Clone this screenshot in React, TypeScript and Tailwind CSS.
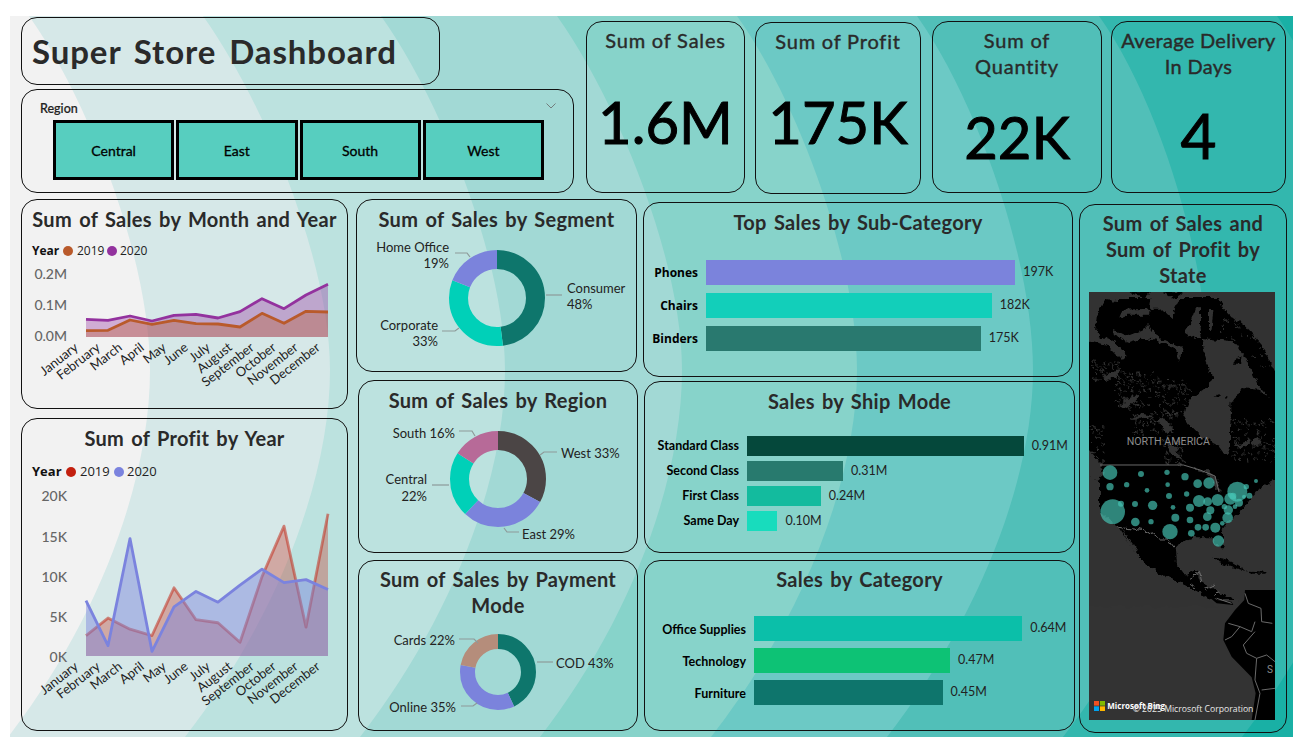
import React from "react";

const waves = [
  { top: 29, mid: 150, bottom: 8, fill: "#d6e8e8" },
  { top: 203, mid: 330, bottom: 185, fill: "#bce2df" },
  { top: 381, mid: 505, bottom: 360, fill: "#a2d9d5" },
  { top: 557, mid: 682, bottom: 540, fill: "#87d3ca" },
  { top: 737, mid: 857, bottom: 711, fill: "#6cc9c5" },
  { top: 917, mid: 1033, bottom: 887, fill: "#51bfb8" },
  { top: 1099, mid: 1208, bottom: 1063, fill: "#33b7ae" },
  { top: 1277, mid: 1385, bottom: 1242, fill: "#19b0a5" },
];

const months = ["January", "February", "March", "April", "May", "June", "July", "August", "September", "October", "November", "December"];

// points below were read off the 3x crops, so they go through a 1/3 transform
const sales2020 = [373, 376, 363, 378, 361, 358, 369, 350, 311, 341, 300, 268];
const sales2019 = [407, 406, 375, 388, 376, 386, 387, 396, 355, 385, 349, 351];
const profit2019 = [655, 603, 636, 655, 513, 608, 617, 675, 480, 330, 630, 293];
const profit2020 = [551, 685, 367, 702, 570, 524, 556, 505, 458, 498, 489, 518];

const bubbles = [
  [75, 68, 22], [75, 110, 11], [125, 104, 8], [168, 72, 9], [246, 67, 8], [300, 80, 11], [338, 101, 13], [372, 99, 17],
  [248, 104, 7], [186, 121, 7], [252, 138, 9], [305, 132, 8], [150, 162, 9], [108, 161, 9], [83, 185, 37], [203, 166, 14],
  [264, 172, 7], [151, 216, 13], [198, 215, 8], [271, 203, 12], [255, 245, 23], [315, 173, 12], [315, 210, 10], [319, 250, 10],
  [339, 232, 10], [362, 232, 10], [391, 233, 15], [367, 200, 13], [376, 181, 12], [342, 153, 18], [368, 155, 13], [398, 150, 18],
  [436, 146, 18], [457, 125, 30], [462, 158, 12], [430, 180, 14], [428, 203, 16], [412, 220, 7], [400, 273, 17], [513, 93, 6],
  [484, 110, 8], [493, 137, 9], [477, 140, 6], [444, 138, 10], [450, 170, 7], [418, 170, 8],
];

function specks(count: number, x: number, y: number, w: number, h: number, seed: number) {
  const out: number[][] = [];
  for (let i = 0; i < count; i++) {
    const a = Math.sin(i * 12.9898 + seed) * 43758.5453;
    const b = Math.sin(i * 78.233 + seed) * 24634.6345;
    out.push([x + (a - Math.floor(a)) * w, y + (b - Math.floor(b)) * h]);
  }
  return out;
}

const lakeSpecks = [
  ...specks(90, 90, 250, 110, 110, 1),
  ...specks(80, 210, 270, 100, 110, 2),
  ...specks(50, 140, 370, 130, 70, 3),
  ...specks(90, 440, 390, 130, 130, 4),
  ...specks(30, 15, 410, 40, 120, 5),
  ...specks(40, 230, 440, 70, 90, 6),
  ...specks(50, 20, 215, 80, 60, 7),
  ...specks(60, 390, 90, 170, 160, 8),
];

function Card({ className = "", children }: { className?: string; children?: React.ReactNode }) {
  return <div className={`rounded-[16px] border border-[#111] ${className}`}>{children}</div>;
}

function Title({ children, className = "h-[41px] pb-[4px]" }: { children: React.ReactNode; className?: string }) {
  return (
    <div className={`flex items-center justify-center text-center text-[20px] leading-[26px] font-bold tracking-[0.3px] text-[#2a2a2a] [word-spacing:2px] ${className}`}>
      {children}
    </div>
  );
}

function Kpi({ title, value, className, titleClass = "tracking-[0.8px]", valueClass }: { title: React.ReactNode; value: string; className: string; titleClass?: string; valueClass: string }) {
  return (
    <Card className={`flex shrink-0 flex-col h-[172px] pt-[5px] ${className}`}>
      <div className={`text-center text-[20px] leading-[26px] text-[#2a2a2a] [-webkit-text-stroke:0.4px_#2a2a2a] ${titleClass}`}>{title}</div>
      <div className={`text-center text-black [-webkit-text-stroke:1px_black] ${valueClass}`}>{value}</div>
    </Card>
  );
}

function AreaChart({ top, height, lines, ticks, legend, baseline, scaleY }: {
  top: number;
  height: number;
  lines: { points: number[]; color: string; opacity: number; lineOpacity: number }[];
  ticks: { label: string; y: number }[];
  legend: { y: number; size: number; yearX: number; a: number; b: number; colors: [string, string] };
  baseline: number;
  scaleY: (y: number) => number;
}) {
  const xAt = (i: number) => 86 + i * 22;
  return (
    <svg viewBox={`22 ${top} 325 ${height}`} className="block w-[325px]" style={{ height }}>
      <text x={legend.yearX} y={legend.y + 4} fontSize={legend.size} fontWeight={700} fill="#111" fontFamily="Open Sans">Year</text>
      <circle cx={legend.a - 9} cy={legend.y} r={5} fill={legend.colors[0]} />
      <text x={legend.a} y={legend.y + 4} fontSize={legend.size} fill="#222" fontFamily="Open Sans">2019</text>
      <circle cx={legend.b - 8} cy={legend.y} r={5} fill={legend.colors[1]} />
      <text x={legend.b} y={legend.y + 4} fontSize={legend.size} fill="#222" fontFamily="Open Sans">2020</text>
      {ticks.map((t) => (
        <text key={t.label} x={67} y={t.y + 5} textAnchor="end" fontSize={14} fontWeight={500} fill="#666">{t.label}</text>
      ))}
      {lines.map((l) => {
        const pts = l.points.map((p, i) => `${xAt(i)},${scaleY(p)}`).join(" ");
        return (
          <g key={l.color}>
            <polygon points={`86,${baseline} ${pts} 328,${baseline}`} fill={l.color} fillOpacity={l.opacity} />
            <polyline points={pts} fill="none" stroke={l.color} strokeWidth={2.8} strokeOpacity={l.lineOpacity} strokeLinejoin="round" />
          </g>
        );
      })}
      {months.map((m, i) => (
        <text key={m} x={xAt(i) - 7} y={baseline + 12} textAnchor="end" fontSize={13} fill="#222" transform={`rotate(-38 ${xAt(i) - 7} ${baseline + 12})`}>
          {m}
        </text>
      ))}
    </svg>
  );
}

function Donut({ cx, cy, r, width, segments }: { cx: number; cy: number; r: number; width: number; segments: { share: number; color: string }[] }) {
  let used = 0;
  return (
    <g transform={`rotate(-90 ${cx} ${cy})`}>
      {segments.map((s) => {
        const el = (
          <circle key={s.color} cx={cx} cy={cy} r={r} fill="none" stroke={s.color} strokeWidth={width} pathLength={100} strokeDasharray={`${s.share} 100`} strokeDashoffset={-used} />
        );
        used += s.share;
        return el;
      })}
    </g>
  );
}

function Leader({ points }: { points: string }) {
  return <polyline points={points} fill="none" stroke="#8d9a99" strokeWidth={1.2} />;
}

function Label({ x, y, anchor = "start", children }: { x: number; y: number; anchor?: "start" | "end"; children: string }) {
  return (
    <text x={x} y={y + 5} textAnchor={anchor} fontSize={13} fill="#222">{children}</text>
  );
}

function Bars({ rows, labelWidth, scale, barHeight, gap, className, labelClass, valueClass }: {
  rows: { label: string; value: number; text: string; color: string }[];
  labelWidth: string;
  scale: number;
  barHeight: number;
  gap: string;
  className: string;
  labelClass: string;
  valueClass: string;
}) {
  return (
    <div className={`flex flex-col ${gap} ${className}`}>
      {rows.map((r) => (
        <div key={r.label} className="flex items-center">
          <div className={`shrink-0 pr-2 text-right text-black ${labelWidth} ${labelClass}`}>{r.label}</div>
          <div className="shrink-0" style={{ width: r.value * scale, height: barHeight, backgroundColor: r.color }} />
          <div className={`pl-2 text-[#222] ${valueClass}`}>{r.text}</div>
        </div>
      ))}
    </div>
  );
}

function StoreMap() {
  return (
    <svg viewBox="1089 292 186 428" className="block h-[428px] w-[186px] bg-[#333]">
      <defs>
        <filter id="coast" x="-10%" y="-10%" width="120%" height="120%">
          <feTurbulence type="fractalNoise" baseFrequency="0.05" numOctaves={3} seed={4} />
          <feDisplacementMap in="SourceGraphic" scale={22} xChannelSelector="R" yChannelSelector="G" />
        </filter>
      </defs>
      {/* canada and arctic, coords from the 3x crop at 1085,288 */}
      <g transform="translate(1085 288) scale(0.3333)">
        <g filter="url(#coast)">
          <rect x="-30" y="30" width="640" height="550" fill="#000" />
          <g fill="#333">
            <path d="M380 -20 H620 V260 L570 250 530 170 480 115 440 85 415 60 Z" />
            <path d="M-30 -20 H140 V12 L100 40 60 35 35 85 30 130 60 150 95 165 125 205 110 215 70 175 -30 150 Z" />
            <path d="M110 65 L195 62 190 80 130 80 100 92 Z" />
            <path d="M85 125 L125 145 175 125 190 110 215 145 260 165 290 175 285 222 265 180 215 158 170 152 130 162 90 145 Z" />
            <path d="M200 20 L290 20 260 90 230 62 195 62 Z" />
            <path d="M320 100 L335 55 345 55 345 100 350 150 330 150 300 130 Z" />
            <path d="M372 60 L385 60 380 125 372 130 Z" />
            <path d="M350 150 L400 155 445 160 480 205 500 250 520 290 555 330 520 305 470 300 440 345 435 420 435 480 425 505 400 470 345 440 310 405 295 380 305 345 365 300 385 265 370 240 355 180 Z" />
            <rect x="-30" y="-20" width="640" height="45" />
            {lakeSpecks.map(([x, y], i) => (
              <rect key={i} x={x} y={y} width={i % 3 === 0 ? 10 : 6} height={3} transform={`rotate(${(i * 37) % 90} ${x} ${y})`} />
            ))}
            <path d="M100 352 L135 325 170 320 145 345 125 360 Z M55 270 L85 245 110 240 90 262 65 280 Z M130 395 L175 378 205 385 165 395 Z M215 400 L235 385 265 425 245 435 Z M245 465 L275 480 285 515 262 500 Z" />
            <path d="M455 470 L500 455 490 470 450 480 Z M500 460 L525 445 520 470 505 472 Z" />
          </g>
          <path d="M130 10 L200 10 180 30 Z M230 10 L300 10 270 32 Z M450 215 L470 205 465 230 445 230 Z M385 325 L405 318 402 328 Z M418 332 L428 328 426 338 Z" fill="#000" />
        </g>
      </g>
      {/* usa, mexico, caribbean, coords from the 3x crop at 1085,450 */}
      <g transform="translate(1085 450) scale(0.3333)">
        <g filter="url(#coast)">
          <rect x="-30" y="60" width="640" height="390" fill="#000" />
          <path fill="#333" d="M-30 70 L45 90 45 185 80 215 105 235 125 255 160 320 195 350 235 375 300 405 340 425 400 470 H-30 Z" />
          <path fill="#333" d="M620 92 L570 92 530 110 500 140 460 190 430 215 410 240 415 265 412 292 398 292 385 262 330 262 290 275 270 300 272 340 300 375 335 365 345 395 405 430 440 445 480 470 H620 Z" />
          <path fill="#333" d="M-30 -6 L12 0 40 30 55 60 45 90 -30 70 Z" />
          <path fill="#000" d="M100 232 L160 320 195 350 235 375 300 405 340 425 400 450 440 445 405 430 345 395 335 365 300 375 272 340 270 300 250 270 190 245 Z" />
          <path fill="#333" d="M112 238 L135 270 170 320 160 322 128 275 Z" />
          <path fill="#333" d="M330 52 L345 62 370 60 395 82 404 122 392 112 384 90 360 70 330 62 Z" />
          <path fill="#000" d="M385 322 L440 335 490 365 450 354 400 335 Z M495 365 L540 368 535 374 500 374 Z" />
          <g fill="none" stroke="#6a6a6a" strokeWidth={3}>
            <path d="M100 232 L150 238 190 245 222 270 248 270 270 298" />
            <path d="M318 385 L345 368 350 400 M315 400 L330 410 M360 415 L395 402 M385 440 L400 425" />
          </g>
        </g>
        <path d="M45 45 H295 L345 60 390 78 402 125" fill="none" stroke="#6a6a6a" strokeWidth={3} />
        <text x="125" y="-14" fontSize="32" fill="#8c8c8c" fontFamily="Roboto">NORTH AMERICA</text>
        {bubbles.map(([x, y, r], i) => (
          <circle key={i} cx={x} cy={y} r={r} fill="#45c4b4" fillOpacity={0.68} />
        ))}
      </g>
      {/* south america, coords from the 3x crop at 1085,590 */}
      <g transform="translate(1085 590) scale(0.3333)">
        <path fill="#000" d="M480 0 L478 30 450 60 420 100 415 150 440 200 500 262 512 310 500 390 H570 V0 Z" />
        <path fill="#000" d="M360 0 L395 30 440 35 445 45 395 40 365 15 Z" />
        <g fill="none" stroke="#6a6a6a" strokeWidth={3}>
          <path d="M480 10 L490 40 528 55 530 95 562 100" />
          <path d="M430 100 L465 110 500 125 510 95" />
          <path d="M465 110 L440 140 420 150" />
          <path d="M510 125 L475 165 485 190 515 205 545 195 570 215" />
          <path d="M515 205 L510 270 525 310 510 390" />
          <path d="M530 300 L570 295" />
          <path d="M395 25 L440 40" />
        </g>
        <text x="546" y="250" fontSize="30" fill="#8c8c8c" fontFamily="Roboto">S</text>
        <rect x="27" y="333" width="15" height="14" fill="#f25022" />
        <rect x="45" y="333" width="15" height="14" fill="#7fba00" />
        <rect x="27" y="349" width="15" height="14" fill="#00a4ef" />
        <rect x="45" y="349" width="15" height="14" fill="#ffb900" />
        <text x="67" y="357" fontSize="24" fontWeight={700} fill="#fff" fontFamily="Open Sans">Microsoft Bing</text>
        <text x="143" y="367" fontSize="26" fill="#e8e8e8" fontFamily="Open Sans">© 2025 Microsoft Corporation</text>
      </g>
    </svg>
  );
}

export default function App() {
  return (
    <div className="min-h-[751px] bg-white pt-4 pl-[10px] font-['Lato',sans-serif]">
      <div className="relative h-[721px] w-[1283px] overflow-hidden bg-[#f2f2f2]">
        <svg viewBox="10 16 1283 721" className="absolute inset-0 h-full w-full">
          {waves.map((w) => (
            <path
              key={w.top}
              fill={w.fill}
              d={`M${w.top} 16 C${w.top + 60} 100 ${w.mid} 260 ${w.mid} 370 C${w.mid} 480 ${w.bottom + 91} 620 ${w.bottom} 737 H1300 V16 Z`}
            />
          ))}
        </svg>

        <div className="relative flex flex-col">
          <div className="flex">
            <div className="ml-[11px] w-[553px] shrink-0">
              <Card className="mt-[1px] flex h-[68px] w-[419px] items-center pl-[10px]">
                <div className="text-[33px] leading-none font-bold tracking-[0.9px] text-[#2a2a2a] [word-spacing:4px]">Super Store Dashboard</div>
              </Card>
              <Card className="mt-[4px] h-[104px]">
                <div className="flex h-[30px] items-end justify-between pr-[17px] pl-[18px]">
                  <div className="pb-[1px] text-[12.5px] font-medium text-[#222] [-webkit-text-stroke:0.2px_#222]">Region</div>
                  <svg viewBox="0 0 10 6" className="mb-[11px] h-[6px] w-[10px]">
                    <polyline points="0.5,0.5 5,5 9.5,0.5" fill="none" stroke="#666" strokeWidth="0.8" />
                  </svg>
                </div>
                <div className="ml-[31px] flex w-[491px] gap-[2px]">
                  {["Central", "East", "South", "West"].map((r) => (
                    <div key={r} className="flex h-[60px] flex-1 items-center justify-center border-[3px] border-black bg-[#57cebf] text-[14px] text-black [-webkit-text-stroke:0.3px_black]">
                      {r}
                    </div>
                  ))}
                </div>
              </Card>
            </div>

            <Kpi className="mt-[5px] ml-[12px] w-[159px]" title="Sum of Sales" value="1.6M" valueClass="mt-[36px] text-[58px] leading-[66px]" />
            <Kpi className="mt-[6px] ml-[10px] w-[166px]" title="Sum of Profit" value="175K" valueClass="mt-[35px] text-[58px] leading-[66px]" />
            <Kpi className="mt-[5px] ml-[11px] w-[170px]" title={<>Sum of<br />Quantity</>} value="22K" valueClass="mt-[25px] text-[58px] leading-[66px]" />
            <Kpi className="mt-[5px] ml-[9px] w-[175px]" titleClass="tracking-[0.3px]" title={<>Average Delivery<br />In Days</>} value="4" valueClass="mt-[23px] text-[62px] leading-[66px]" />
          </div>

          <div className="mt-[5px] flex">
            <div className="ml-[11px] flex w-[327px] shrink-0 flex-col gap-[9px]">
              <Card className="h-[210px]">
                <Title>Sum of Sales by Month and Year</Title>
                <AreaChart
                  top={241}
                  height={167}
                  baseline={337}
                  scaleY={(y) => 195 + y / 3}
                  legend={{ y: 251, size: 12, yearX: 32, a: 77, b: 120, colors: ["#b95a2b", "#93329e"] }}
                  ticks={[{ label: "0.2M", y: 274 }, { label: "0.1M", y: 305 }, { label: "0.0M", y: 336 }]}
                  lines={[
                    { points: sales2020, color: "#93329e", opacity: 0.36, lineOpacity: 1 },
                    { points: sales2019, color: "#b95a2b", opacity: 0.36, lineOpacity: 1 },
                  ]}
                />
              </Card>
              <Card className="h-[313px]">
                <Title>Sum of Profit by Year</Title>
                <AreaChart
                  top={460}
                  height={270}
                  baseline={656}
                  scaleY={(y) => 415 + y / 2.97}
                  legend={{ y: 472, size: 13, yearX: 32, a: 80, b: 127, colors: ["#c3200f", "#7b83de"] }}
                  ticks={[{ label: "20K", y: 496 }, { label: "15K", y: 537 }, { label: "10K", y: 577 }, { label: "5K", y: 617 }, { label: "0K", y: 657 }]}
                  lines={[
                    { points: profit2019, color: "#c3301f", opacity: 0.34, lineOpacity: 0.55 },
                    { points: profit2020, color: "#7b83de", opacity: 0.45, lineOpacity: 1 },
                  ]}
                />
              </Card>
            </div>

            <div className="ml-[8px] flex w-[282px] shrink-0 flex-col gap-[7px]">
              <Card className="h-[173px] w-[281px]">
                <Title>Sum of Sales by Segment</Title>
                <svg viewBox="357 241 279 130" className="block h-[130px] w-[279px]">
                  <Donut cx={497} cy={298} r={38.5} width={19} segments={[{ share: 48, color: "#0e766c" }, { share: 33, color: "#00d0b8" }, { share: 19, color: "#7b83dc" }]} />
                  <Leader points="455,253 467,253 470,257" />
                  <Leader points="546,295 562,295" />
                  <Leader points="442,331 455,331 459,328" />
                  <Label x={449} y={247} anchor="end">Home Office</Label>
                  <Label x={449} y={263} anchor="end">19%</Label>
                  <Label x={567} y={288}>Consumer</Label>
                  <Label x={567} y={304}>48%</Label>
                  <Label x={438} y={325} anchor="end">Corporate</Label>
                  <Label x={438} y={341} anchor="end">33%</Label>
                </svg>
              </Card>
              <Card className="mt-[1px] ml-[2px] h-[173px] w-[280px]">
                <Title>Sum of Sales by Region</Title>
                <svg viewBox="359 422 278 130" className="block h-[130px] w-[278px]">
                  <Donut cx={498} cy={479} r={38.5} width={19} segments={[{ share: 33, color: "#4b4545" }, { share: 29, color: "#7b83dc" }, { share: 22, color: "#00d0b8" }, { share: 16, color: "#b76a98" }]} />
                  <Leader points="459,431 472,431 475,436" />
                  <Leader points="557,452 544,452 540,455" />
                  <Leader points="432,485 449,485" />
                  <Leader points="504,528 507,532 519,532" />
                  <Label x={455} y={433} anchor="end">South 16%</Label>
                  <Label x={561} y={453}>West 33%</Label>
                  <Label x={427} y={479} anchor="end">Central</Label>
                  <Label x={427} y={496} anchor="end">22%</Label>
                  <Label x={522} y={534}>East 29%</Label>
                </svg>
              </Card>
              <Card className="ml-[2px] h-[171px] w-[280px]">
                <Title className="h-[59px] pt-[2px]">Sum of Sales by Payment<br />Mode</Title>
                <svg viewBox="359 620 278 110" className="block h-[110px] w-[278px]">
                  <Donut cx={498} cy={672} r={30.5} width={15} segments={[{ share: 43, color: "#0e766c" }, { share: 35, color: "#7b83dc" }, { share: 22, color: "#b58d7b" }]} />
                  <Leader points="459,639 474,639 478,643" />
                  <Leader points="537,662 553,662" />
                  <Leader points="461,706 473,706 477,703" />
                  <Label x={455} y={640} anchor="end">Cards 22%</Label>
                  <Label x={556} y={663}>COD 43%</Label>
                  <Label x={456} y={707} anchor="end">Online 35%</Label>
                </svg>
              </Card>
            </div>

            <div className="ml-[5px] flex w-[432px] shrink-0 flex-col gap-[4px] pt-[3px]">
              <Card className="h-[175px] w-[430px]">
                <Title className="h-[42px] pb-[5px]">Top Sales by Sub-Category</Title>
                <Bars
                  className="mt-[15px]"
                  labelWidth="w-[62px]"
                  labelClass="text-[12px] font-bold font-['Open_Sans',sans-serif]"
                  valueClass="text-[12.5px]"
                  scale={1.57}
                  barHeight={25}
                  gap="gap-[8px]"
                  rows={[
                    { label: "Phones", value: 197, text: "197K", color: "#7b83dc" },
                    { label: "Chairs", value: 182, text: "182K", color: "#12cfba" },
                    { label: "Binders", value: 175, text: "175K", color: "#29796f" },
                  ]}
                />
              </Card>
              <Card className="ml-[1px] h-[172px] w-[431px]">
                <Title className="h-[40px] pb-[3px]">Sales by Ship Mode</Title>
                <Bars
                  className="mt-[14px]"
                  labelWidth="w-[102px]"
                  labelClass="text-[12.5px] font-bold pt-[1px]"
                  valueClass="text-[12.5px]"
                  scale={304}
                  barHeight={20}
                  gap="gap-[5px]"
                  rows={[
                    { label: "Standard Class", value: 0.91, text: "0.91M", color: "#05483b" },
                    { label: "Second Class", value: 0.316, text: "0.31M", color: "#287a6e" },
                    { label: "First Class", value: 0.243, text: "0.24M", color: "#13bb9e" },
                    { label: "Same Day", value: 0.1, text: "0.10M", color: "#18dcbd" },
                  ]}
                />
              </Card>
              <Card className="mt-[3px] ml-[1px] h-[171px] w-[431px]">
                <Title className="h-[39px] pb-[4px]">Sales by Category</Title>
                <Bars
                  className="mt-[16px]"
                  labelWidth="w-[109px]"
                  labelClass="text-[12.5px] font-bold pt-[3px]"
                  valueClass="text-[12.5px]"
                  scale={419}
                  barHeight={25}
                  gap="gap-[7px]"
                  rows={[
                    { label: "Office Supplies", value: 0.64, text: "0.64M", color: "#0bbfa9" },
                    { label: "Technology", value: 0.468, text: "0.47M", color: "#0dc275" },
                    { label: "Furniture", value: 0.45, text: "0.45M", color: "#0e756c" },
                  ]}
                />
              </Card>
            </div>

            <Card className="mt-[5px] ml-[4px] h-[529px] w-[208px] shrink-0 px-[9px]">
              <Title className="h-[87px]">Sum of Sales and<br />Sum of Profit by<br />State</Title>
              <StoreMap />
            </Card>
          </div>
        </div>
      </div>
    </div>
  );
}
